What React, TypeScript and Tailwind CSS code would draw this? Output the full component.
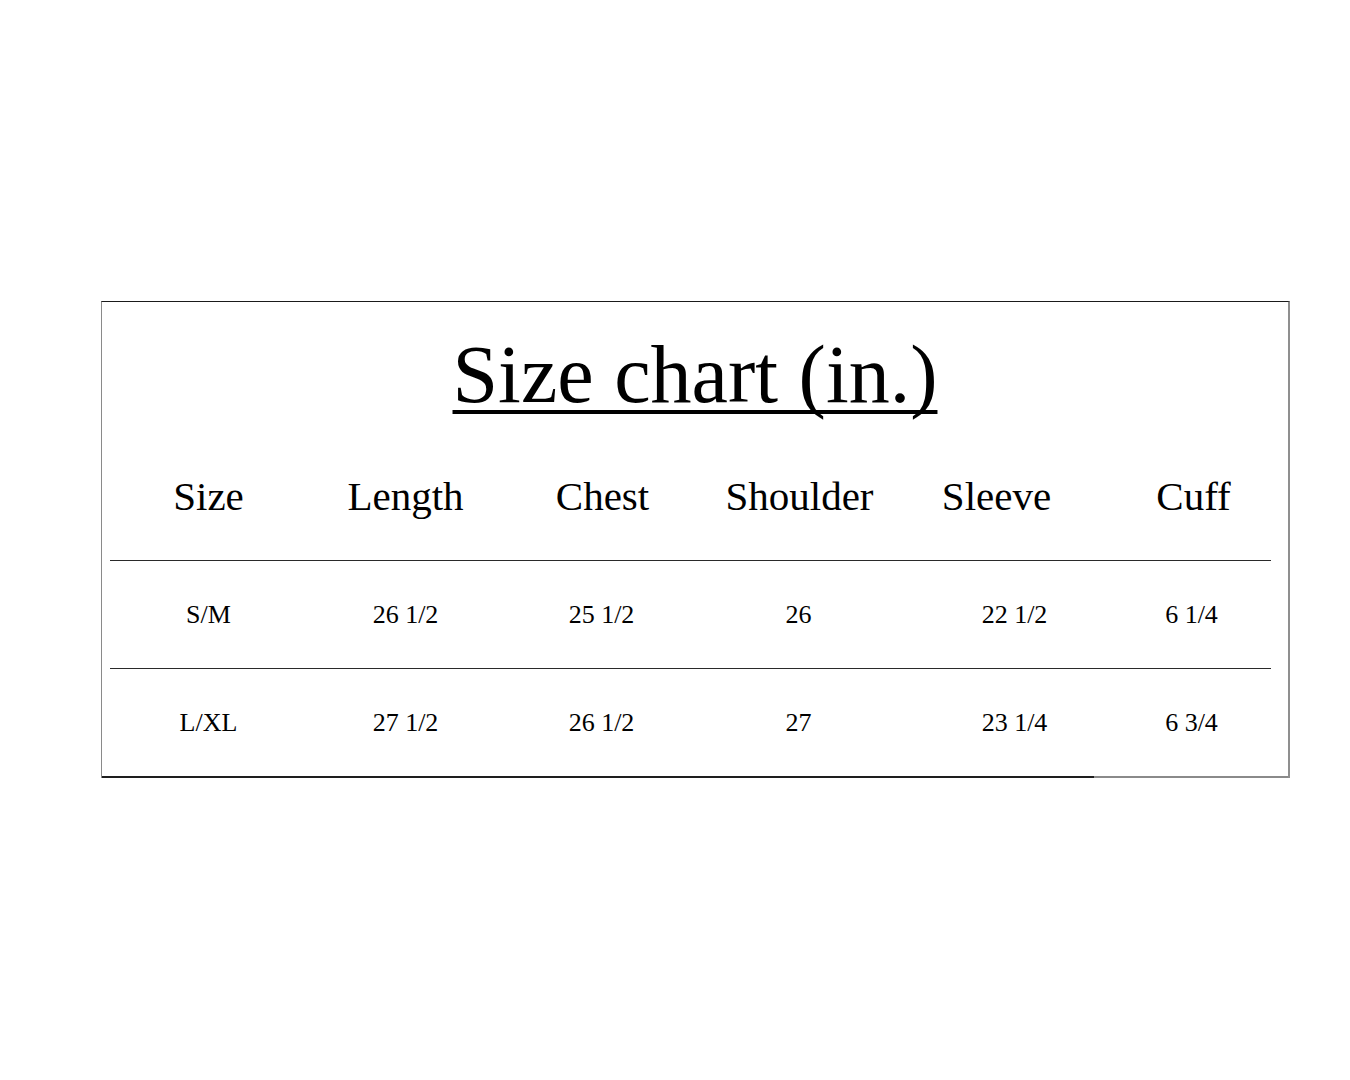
const HEADERS = ['Size', 'Length', 'Chest', 'Shoulder', 'Sleeve', 'Cuff']

const ROWS = [
  ['S/M', '26 1/2', '25 1/2', '26', '22 1/2', '6 1/4'],
  ['L/XL', '27 1/2', '26 1/2', '27', '23 1/4', '6 3/4'],
]

// data cells sit a little off the header centres in the original
const CELL_SHIFT = ['', '', 'pr-[2px]', 'pr-[2px]', 'pl-[36px]', 'pr-[4px]']

export default function App() {
  return (
    <div className="w-[1350px] h-[1080px] bg-white pt-[301px] pl-[101px] font-['Liberation_Serif','Times_New_Roman',serif] text-black">
      <div className="w-[1189px] flex flex-col border-t border-t-[#1a1a1a] border-l border-l-[#8a8a8a] border-r-2 border-r-[#8f8f8f]">
        {/* Title */}
        <div className="pt-[32px] flex justify-center">
          <h1 className="text-[82px] leading-none underline decoration-[4px] underline-offset-[8px] [text-decoration-skip-ink:none]">
            Size chart (in.)
          </h1>
        </div>

        {/* Column headers */}
        <div className="mt-[60px] ml-[8px] grid grid-cols-[repeat(6,197px)] h-[84px]">
          {HEADERS.map(h => (
            <div key={h} className="text-center text-[41px] leading-none">{h}</div>
          ))}
        </div>

        {ROWS.map((row, i) => (
          <div key={i}>
            <div className="ml-[8px] w-[1161px] h-px bg-[#2a2a2a]" />
            <div className="ml-[8px] grid grid-cols-[repeat(6,197px)] h-[107px] items-center">
              {row.map((cell, j) => (
                <div key={j} className={`text-center text-[26px] leading-none ${CELL_SHIFT[j]}`}>
                  {cell}
                </div>
              ))}
            </div>
          </div>
        ))}

        {/* Bottom edge: dark on the left, lighter toward the right */}
        <div className="flex h-[2px]">
          <div className="w-[992px] bg-[#1e1e1e]" />
          <div className="flex-1 bg-[#8a8a8a]" />
        </div>
      </div>
    </div>
  )
}
